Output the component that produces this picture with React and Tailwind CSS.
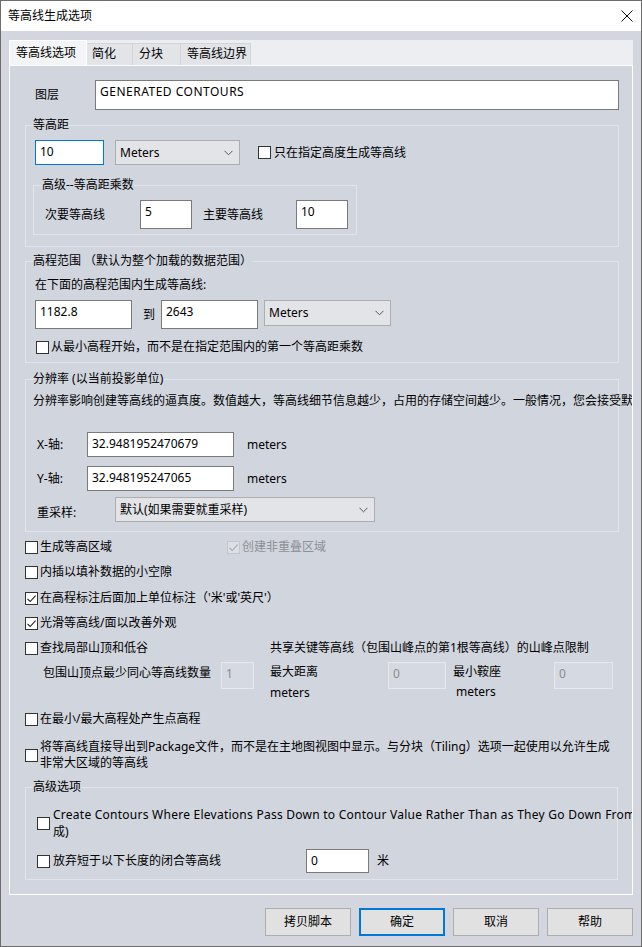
import React from "react";

function Check({ checked, disabled }) {
  return (
    <span
      className={
        disabled
          ? "w-[13px] h-[13px] shrink-0 border border-[#c4c6cb] bg-[#dcdfe5] flex items-center justify-center"
          : "w-[13px] h-[13px] shrink-0 border border-[#333333] bg-white flex items-center justify-center"
      }
    >
      {checked && (
        <svg width="11" height="11" viewBox="0 0 11 11">
          <path
            d="M1.5 5.8 L4.2 8.5 L9.6 2.6"
            fill="none"
            stroke={disabled ? "#a6a8ad" : "#222222"}
            strokeWidth="1.1"
          />
        </svg>
      )}
    </span>
  );
}

function Box({ className, children, focus, disabled }) {
  return (
    <div
      className={
        (focus
          ? "border border-[#0078d7] bg-white text-black "
          : disabled
          ? "border border-[#e6e8ed] bg-[#d5d9e1] text-[#8c8c8c] "
          : "border border-[#7a7a7a] bg-white text-black ") +
        "shrink-0 pl-[4px] pt-[3px] leading-[16px] whitespace-nowrap overflow-hidden " +
        className
      }
    >
      {children}
    </div>
  );
}

function Select({ className, children }) {
  return (
    <div
      className={
        "shrink-0 border border-[#adadad] bg-[#e3e4e8] flex items-center justify-between pl-[4px] pr-[6px] leading-[16px] whitespace-nowrap " +
        className
      }
    >
      <span>{children}</span>
      <svg width="9" height="6" viewBox="0 0 9 6">
        <path d="M0.5 0.8 L4.5 4.8 L8.5 0.8" fill="none" stroke="#555" strokeWidth="1" />
      </svg>
    </div>
  );
}

function Group({ label, className, children, legendClass }) {
  return (
    <fieldset className={"min-w-0 border border-[#e1e4ea] " + className}>
      <legend className={"leading-[16px] " + (legendClass || "")}>{label}</legend>
      {children}
    </fieldset>
  );
}

function Btn({ children, primary }) {
  return (
    <div
      className={
        primary
          ? "w-[86px] h-[28px] border-2 border-[#0078d7] bg-[#e1e1e1] flex items-center justify-center"
          : "w-[86px] h-[28px] border border-[#adadad] bg-[#e1e1e1] flex items-center justify-center"
      }
    >
      {children}
    </div>
  );
}

export default function App() {
  return (
    <div className="w-[642px] h-[947px] bg-[#d3d6de] border border-[#6d6d6d] flex flex-col overflow-hidden text-[12px] leading-[16px] text-black font-['Noto_Sans','Noto_Sans_CJK_SC',sans-serif]">
      {/* title bar */}
      <div className="h-[30px] shrink-0 bg-white flex items-center justify-between pl-[7px] pr-[8px]">
        <span>等高线生成选项</span>
        <svg width="12" height="12" viewBox="0 0 12 12">
          <path d="M0.5 0.5 L11.5 11.5 M11.5 0.5 L0.5 11.5" stroke="#111" strokeWidth="1" fill="none" />
        </svg>
      </div>

      <div className="flex-1 flex flex-col px-[8px] pt-[9px]">
        {/* tab strip */}
        <div className="h-[25px] shrink-0 bg-[#eceef1] flex items-end">
          <div className="w-[78px] h-[25px] bg-[#f3f4f6] border-l border-t border-r border-white pl-[6px] pt-[4px]">
            等高线选项
          </div>
          <div className="w-[46px] h-[22px] bg-[#e2e4e8] border-t border-r border-[#d2d4d9] pl-[5px] pt-[2px]">
            简化
          </div>
          <div className="w-[48px] h-[22px] bg-[#e2e4e8] border-t border-r border-[#d2d4d9] pl-[6px] pt-[2px]">
            分块
          </div>
          <div className="w-[70px] h-[22px] bg-[#e2e4e8] border-t border-r border-[#d2d4d9] pl-[6px] pt-[2px]">
            等高线边界
          </div>
        </div>

        {/* panel */}
        <div className="h-[830px] shrink-0 bg-[#d1d5de] border border-white overflow-hidden flex flex-col pt-[14px] pl-[15px]">
          {/* layer row */}
          <div className="flex items-center h-[30px]">
            <span className="ml-[10px] w-[60px]">图层</span>
            <Box className="w-[524px] h-[30px] tracking-[0.5px]">GENERATED CONTOURS</Box>
          </div>

          {/* 等高距 */}
          <Group label="等高距" className="mt-[7px] w-[594px] px-[7px] pb-[11px]">
            <div className="mt-[7px] flex items-center h-[25px]">
              <Box focus className="ml-[2px] w-[69px] h-[25px]">10</Box>
              <Select className="ml-[11px] w-[125px] h-[25px]">Meters</Select>
              <span className="ml-[18px]"><Check /></span>
              <span className="ml-[3px]">只在指定高度生成等高线</span>
            </div>
            <Group label="高级--等高距乘数" className="mt-[12px] w-[324px] px-[8px] pb-[5px]">
              <div className="mt-[7px] flex items-center h-[29px]">
                <span className="ml-[3px] w-[95px]">次要等高线</span>
                <Box className="w-[52px] h-[29px]">5</Box>
                <span className="ml-[11px] w-[93px]">主要等高线</span>
                <Box className="w-[52px] h-[29px]">10</Box>
              </div>
            </Group>
          </Group>

          {/* 高程范围 */}
          <Group label="高程范围 （默认为整个加载的数据范围）" className="mt-[6px] w-[594px] px-[7px] pb-[7px]">
            <div className="mt-[8px] ml-[2px]">在下面的高程范围内生成等高线:</div>
            <div className="mt-[7px] flex items-start h-[29px]">
              <Box className="ml-[2px] w-[97px] h-[29px]">1182.8</Box>
              <span className="ml-[11px] w-[12px] self-center">到</span>
              <Box className="ml-[6px] w-[97px] h-[29px]">2643</Box>
              <Select className="ml-[6px] w-[127px] h-[26px]">Meters</Select>
            </div>
            <div className="mt-[10px] flex items-center h-[16px]">
              <span className="ml-[3px]"><Check /></span>
              <span className="ml-[2px]">从最小高程开始，而不是在指定范围内的第一个等高距乘数</span>
            </div>
          </Group>

          {/* 分辨率 */}
          <Group label="分辨率 (以当前投影单位)" className="mt-[8px] w-[594px] px-[7px] pb-[9px]">
            <div className="mt-[6px] whitespace-nowrap">
              分辨率影响创建等高线的逼真度。数值越大，等高线细节信息越少，占用的存储空间越少。一般情况，您会接受默认值。
            </div>
            <div className="mt-[23px] flex items-center h-[25px]">
              <span className="ml-[4px] w-[50px]">X-轴:</span>
              <Box className="w-[147px] h-[25px]">32.9481952470679</Box>
              <span className="ml-[13px]">meters</span>
            </div>
            <div className="mt-[9px] flex items-center h-[25px]">
              <span className="ml-[4px] w-[50px]">Y-轴:</span>
              <Box className="w-[147px] h-[25px]">32.948195247065</Box>
              <span className="ml-[13px]">meters</span>
            </div>
            <div className="mt-[6px] flex items-start h-[25px]">
              <span className="ml-[4px] w-[78px] mt-[8px]">重采样:</span>
              <Select className="w-[260px] h-[25px]">默认(如果需要就重采样)</Select>
            </div>
          </Group>

          {/* checkbox rows */}
          <div className="mt-[7px] flex items-center h-[16px]">
            <div className="w-[202px] flex items-center">
              <Check />
              <span className="ml-[2px]">生成等高区域</span>
            </div>
            <Check checked disabled />
            <span className="ml-[2px] text-[#8e9096]">创建非重叠区域</span>
          </div>
          <div className="mt-[9px] flex items-center h-[16px]">
            <Check />
            <span className="ml-[2px]">内插以填补数据的小空隙</span>
          </div>
          <div className="mt-[10px] flex items-center h-[16px]">
            <Check checked />
            <span className="ml-[2px]">在高程标注后面加上单位标注（'米'或'英尺'）</span>
          </div>
          <div className="mt-[9px] flex items-center h-[16px]">
            <Check checked />
            <span className="ml-[2px]">光滑等高线/面以改善外观</span>
          </div>
          <div className="mt-[9px] flex items-center h-[16px]">
            <div className="w-[245px] flex items-center">
              <Check />
              <span className="ml-[2px]">查找局部山顶和低谷</span>
            </div>
            <span>共享关键等高线（包围山峰点的第1根等高线）的山峰点限制</span>
          </div>
          <div className="mt-[6px] flex items-start">
            <span className="ml-[18px] w-[178px] mt-[3px] whitespace-nowrap">包围山顶点最少同心等高线数量</span>
            <Box disabled className="w-[33px] h-[27px]">1</Box>
            <div className="ml-[16px] w-[118px] flex flex-col">
              <span className="mt-[2px]">最大距离</span>
              <span className="mt-[5px]">meters</span>
            </div>
            <Box disabled className="w-[58px] h-[27px]">0</Box>
            <div className="ml-[7px] w-[101px] flex flex-col">
              <span className="mt-[2px]">最小鞍座</span>
              <span className="mt-[4px] ml-[3px]">meters</span>
            </div>
            <Box disabled className="w-[59px] h-[27px]">0</Box>
          </div>
          <div className="mt-[10px] flex items-center h-[16px]">
            <Check />
            <span className="ml-[2px]">在最小/最大高程处产生点高程</span>
          </div>
          <div className="mt-[12px] flex items-center">
            <Check />
            <div className="ml-[2px] flex flex-col whitespace-nowrap">
              <span>将等高线直接导出到Package文件，而不是在主地图视图中显示。与分块（Tiling）选项一起使用以允许生成</span>
              <span>非常大区域的等高线</span>
            </div>
          </div>

          {/* 高级选项 */}
          <Group label="高级选项" className="mt-[8px] w-[593px] px-[7px] pb-[6px]">
            <div className="mt-[11px] flex items-center">
              <span className="ml-[4px]"><Check /></span>
              <div className="ml-[3px] flex flex-col whitespace-nowrap leading-[17px]">
                <span className="tracking-[0.25px]">Create Contours Where Elevations Pass Down to Contour Value Rather Than as They Go Down From Contour Value（在高程下降到等高线值时生成）</span>
                <span>成)</span>
              </div>
            </div>
            <div className="mt-[9px] flex items-center h-[24px]">
              <span className="ml-[4px]"><Check /></span>
              <span className="ml-[3px] w-[253px]">放弃短于以下长度的闭合等高线</span>
              <Box className="w-[63px] h-[24px]">0</Box>
              <span className="ml-[8px]">米</span>
            </div>
          </Group>
        </div>

        {/* buttons */}
        <div className="mt-[13px] flex justify-end gap-[8px]">
          <Btn>拷贝脚本</Btn>
          <Btn primary>确定</Btn>
          <Btn>取消</Btn>
          <Btn>帮助</Btn>
        </div>
      </div>
    </div>
  );
}
